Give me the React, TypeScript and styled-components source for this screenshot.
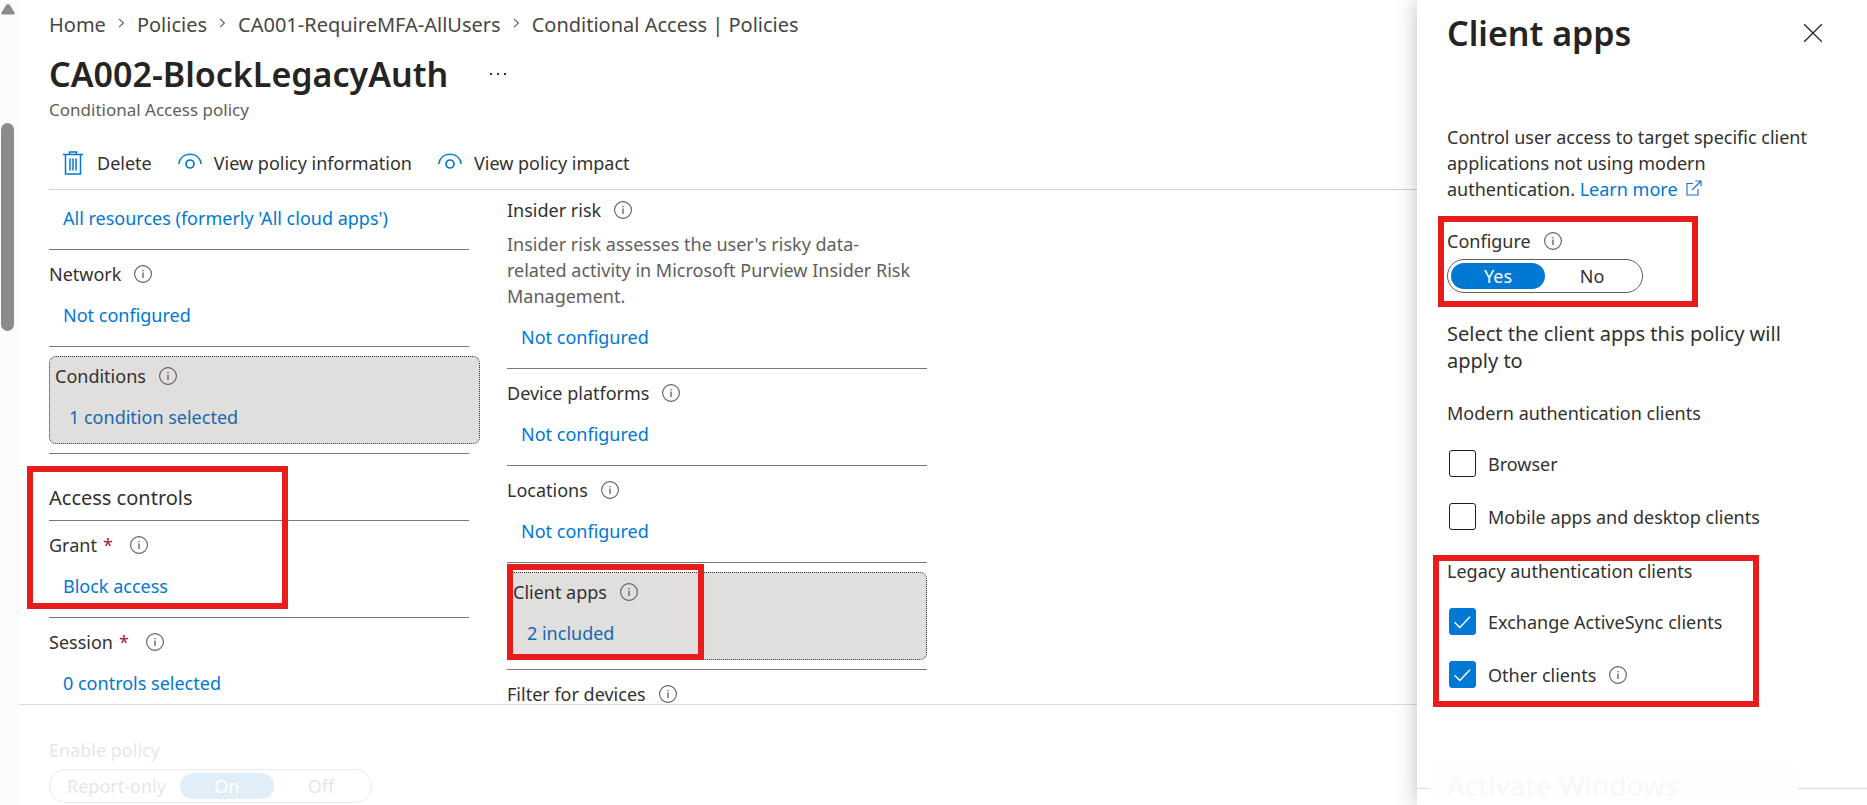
import React from "react";
import styled, { createGlobalStyle, css } from "styled-components";

const GlobalStyle = createGlobalStyle`
  *, *::before, *::after { box-sizing: border-box; }
  body {
    margin: 0;
    background: #fff;
    color: #323130;
    font-family: "Noto Sans", "Open Sans", sans-serif;
    font-size: 18px;
    line-height: 26px;
  }
  h1, h2, h3, p { margin: 0; font-weight: 400; }
  button { font: inherit; color: inherit; background: none; border: 0; padding: 0; cursor: pointer; }
  a { text-decoration: none; }
`;

const Page = styled.div`
  display: grid;
  grid-template-columns: 19px minmax(0, 1fr) 450px;
  height: 100vh;
  overflow: hidden;
`;

/* ---------- scroll rail ---------- */

const Rail = styled.div`
  background: #fcfcfc;
  padding: 4px 0 0 1px;
`;

const RailArrow = styled.svg`
  display: block;
  width: 14px;
  height: 11px;
  fill: #8b8b8b;
`;

const RailThumb = styled.div`
  width: 13px;
  height: 208px;
  margin-top: 108px;
  border-radius: 7px;
  background: #8b8b8b;
`;

/* ---------- main blade ---------- */

const Main = styled.main`
  display: flex;
  flex-direction: column;
  min-width: 0;
  min-height: 0;
`;

const Header = styled.header`
  margin-left: 30px;
  border-bottom: 1px solid #d2d0ce;
`;

const Breadcrumb = styled.nav`
  display: flex;
  align-items: center;
  gap: 12px;
  padding-top: 12px;
  font-size: 20px;
`;

const Crumb = styled.a`
  color: #484644;
`;

const CrumbChevron = styled.svg`
  width: 7px;
  height: 10px;
  margin-bottom: 4px;
  fill: none;
  stroke: #605e5c;
`;

const TitleRow = styled.div`
  display: flex;
  align-items: center;
  gap: 41px;
  padding-top: 12px;
`;

const Title = styled.h1`
  font-size: 34px;
  line-height: 48px;
  font-weight: 600;
  color: #252423;
`;

const MoreButton = styled.button`
  display: flex;
  svg { width: 18px; height: 4px; fill: #323130; }
`;

const Subtitle = styled.p`
  font-size: 17px;
  line-height: 24px;
  color: #605e5c;
`;

const Toolbar = styled.div`
  display: flex;
  gap: 26px;
  padding: 28px 0 13px 12px;
`;

const ToolButton = styled.button`
  display: flex;
  align-items: center;
  gap: 12px;
  svg { display: block; fill: none; stroke: #0078d4; }
`;

const Columns = styled.div`
  flex: 1;
  min-height: 0;
  overflow: hidden;
  display: grid;
  grid-template-columns: 431px 420px;
  column-gap: 27px;
  padding-left: 30px;
`;

const Column = styled.div<{ $top?: number }>`
  padding-top: ${(p) => p.$top ?? 0}px;
`;

const Section = styled.section<{ $ruled?: boolean }>`
  width: 420px;
  padding: ${(p) => (p.$ruled ? "11px 0 18px" : "0 0 18px")};
  border-top: ${(p) => (p.$ruled ? "1px solid #7a7875" : "0")};
`;

const Rule = styled.hr`
  width: 420px;
  margin: 0;
  border: 0;
  border-top: 1px solid #7a7875;
`;

const GroupTitle = styled.h2`
  font-size: 20px;
  padding: 31px 0 9px;
`;

const SelectedCard = styled.section`
  margin: 9px 0;
  padding: 6px 5px 13px;
  background: #e1dfdd;
  border: 1px dotted #323130;
  border-radius: 7px;
  a { color: #1768b3; }
`;

const LabelRow = styled.div`
  display: flex;
  align-items: center;
  gap: 13px;
`;

const Required = styled.span`
  color: #a4262c;
  margin: 0 4px 0 6px;
`;

const InfoSvg = styled.svg`
  width: 18px;
  height: 18px;
  flex: none;
  fill: none;
  stroke: #605e5c;
`;

const Description = styled.p`
  padding: 8px 12px 0 0;
  color: #605e5c;
`;

const ValueLink = styled.a`
  display: block;
  width: fit-content;
  margin: 15px 0 0 14px;
  color: #0078d4;
`;

const Footer = styled.footer`
  border-top: 1px solid #dcdcdc;
  height: 101px;
  padding: 32px 0 0 30px;
`;

const Faded = styled.fieldset`
  margin: 0;
  padding: 0;
  border: 0;
  opacity: 0.12;
`;

const FieldLegend = styled.legend`
  padding: 0 0 3px;
`;

/* ---------- pill toggle ---------- */

const Pills = styled.div`
  display: inline-flex;
  height: 34px;
  padding: 3px;
  border: 1px solid #605e5c;
  border-radius: 17px;
`;

const Pill = styled.label`
  display: flex;
  align-items: center;
  justify-content: center;
  min-width: 94px;
  padding: 0 14px;
  border-radius: 13px;
  cursor: pointer;
  &:has(input:checked) { background: #0078d4; color: #fff; }
  input { appearance: none; width: 0; height: 0; margin: 0; }
`;

/* ---------- side panel ---------- */

const Panel = styled.aside`
  position: relative;
  display: flex;
  flex-direction: column;
  background: #fff;
  box-shadow: 0 0 20px rgba(0, 0, 0, 0.26);
`;

const PanelHeader = styled.div`
  display: flex;
  align-items: center;
  justify-content: space-between;
  padding: 9px 44px 0 30px;
`;

const PanelTitle = styled(Title).attrs({ as: "h2" })``;

const CloseButton = styled.button`
  display: flex;
  svg { width: 20px; height: 20px; fill: none; stroke: #252423; }
`;

const PanelBody = styled.div`
  flex: 1;
  padding: 67px 44px 0 30px;
`;

const LearnMore = styled.a`
  color: #0078d4;
  svg { width: 16px; height: 16px; margin-left: 8px; fill: none; stroke: #1a66e0; }
`;

const Configure = styled.fieldset`
  margin: 26px 0 0;
  padding: 0;
  border: 0;
`;

const ConfigureLegend = styled.legend`
  display: flex;
  align-items: center;
  gap: 13px;
  padding: 0 0 2px;
`;

const Prompt = styled.p`
  font-size: 20px;
  line-height: 27px;
  padding: 27px 24px 0 0;
`;

const CheckGroup = styled.fieldset<{ $top: number }>`
  margin: ${(p) => p.$top}px 0 0;
  padding: 0;
  border: 0;
  legend { padding: 0 0 24px; }
`;

const CheckRow = styled.div`
  display: flex;
  align-items: center;
  gap: 13px;
  padding: 0 0 26px 2px;
  label { display: flex; align-items: center; gap: 12px; cursor: pointer; }
`;

const CheckBox = styled.span`
  display: grid;
  width: 27px;
  height: 27px;
  input {
    grid-area: 1 / 1;
    appearance: none;
    width: 27px;
    height: 27px;
    margin: 0;
    border: 1px solid #201f1e;
    border-radius: 3px;
  }
  input:checked { background: #0078d4; border-color: #0078d4; }
  svg {
    grid-area: 1 / 1;
    width: 27px;
    height: 27px;
    fill: none;
    stroke: #fff;
    pointer-events: none;
    visibility: hidden;
  }
  input:checked + svg { visibility: visible; }
`;

const PanelFooter = styled.div`
  height: 17px;
  border-top: 1px solid #dcdcdc;
`;

const Watermark = styled.div`
  position: absolute;
  left: 13px;
  bottom: 5px;
  width: 368px;
  height: 36px;
  padding-left: 17px;
  overflow: hidden;
  background: #fefefe;
  color: #f7f7f7;
  font-size: 28px;
  line-height: 42px;
`;

/* ---------- red call-outs ---------- */

const Anchor = styled.div`
  position: relative;
`;

const Callout = styled.div<{ $x: number; $y: number; $w: number; $h: number }>`
  position: absolute;
  z-index: 1;
  pointer-events: none;
  border: 6px solid #e81c1c;
  ${(p) => css`
    left: ${p.$x}px;
    top: ${p.$y}px;
    width: ${p.$w}px;
    height: ${p.$h}px;
  `}
`;

/* ---------- icons ---------- */

const InfoIcon = () => (
  <InfoSvg viewBox="0 0 18 18" role="img" aria-label="More information">
    <circle cx="9" cy="9" r="8.4" strokeWidth="1.1" />
    <path d="M9 7.6V13M9 5v1.3" strokeWidth="1.3" />
  </InfoSvg>
);

const TrashIcon = () => (
  <svg width="24" height="24" viewBox="-2 0 24 24" aria-hidden="true">
    <path d="M0 3.5H20M6.5 3.5V1H13.5V3.5M2.5 3.5V23H17.5V3.5" strokeWidth="1.5" />
    <path d="M7 7.5V19.5M10 7.5V19.5M13 7.5V19.5" strokeWidth="1.5" />
  </svg>
);

const EyeIcon = () => (
  <svg width="24" height="20" viewBox="0 0 24 20" aria-hidden="true">
    <path d="M.8 11C1.6 5 6 1.2 12 1.2S22.4 5 23.2 11" strokeWidth="1.5" />
    <circle cx="12" cy="11" r="4" strokeWidth="1.7" />
  </svg>
);

const Chevron = () => (
  <CrumbChevron viewBox="0 0 7 10" aria-hidden="true">
    <path d="M1 .8L5.4 5L1 9.2" strokeWidth="1.1" />
  </CrumbChevron>
);

/* ---------- composed parts ---------- */

type SettingProps = { label: string; value?: string; required?: boolean; description?: string };

const Setting = ({ label, value, required, description }: SettingProps) => (
  <>
    <LabelRow>
      <span>
        {label}
        {required && <Required>*</Required>}
      </span>
      <InfoIcon />
    </LabelRow>
    {description && <Description>{description}</Description>}
    {value && <ValueLink href="#">{value}</ValueLink>}
  </>
);

const PillToggle = ({ name, options, selected }: { name: string; options: string[]; selected: string }) => (
  <Pills>
    {options.map((option) => (
      <Pill key={option}>
        <input type="radio" name={name} value={option} defaultChecked={option === selected} />
        {option}
      </Pill>
    ))}
  </Pills>
);

const Check = ({ label, checked, info }: { label: string; checked?: boolean; info?: boolean }) => (
  <CheckRow>
    <label>
      <CheckBox>
        <input type="checkbox" defaultChecked={checked} />
        <svg viewBox="0 0 27 27" aria-hidden="true">
          <path d="M5.5 14.3L10.8 19.5L21 8.8" strokeWidth="1.4" />
        </svg>
      </CheckBox>
      {label}
    </label>
    {info && <InfoIcon />}
  </CheckRow>
);

const crumbs = ["Home", "Policies", "CA001-RequireMFA-AllUsers", "Conditional Access | Policies"];

export default function App() {
  return (
    <>
      <GlobalStyle />
      <Page>
        <Rail>
          <RailArrow viewBox="0 0 14 11" aria-hidden="true">
            <path d="M7 0Q8 0 8.8 1L13.5 8.5Q14.4 10.5 12.5 10.5H1.5Q-.4 10.5 .5 8.5L5.2 1Q6 0 7 0Z" />
          </RailArrow>
          <RailThumb />
        </Rail>

        <Main>
          <Header>
            <Breadcrumb aria-label="Breadcrumb">
              {crumbs.map((crumb, i) => (
                <React.Fragment key={crumb}>
                  {i > 0 && <Chevron />}
                  <Crumb href="#">{crumb}</Crumb>
                </React.Fragment>
              ))}
            </Breadcrumb>
            <TitleRow>
              <Title>CA002-BlockLegacyAuth</Title>
              <MoreButton type="button" aria-label="More actions">
                <svg viewBox="0 0 18 4" aria-hidden="true">
                  <rect x="1" y="1" width="2" height="2" />
                  <rect x="8" y="1" width="2" height="2" />
                  <rect x="15" y="1" width="2" height="2" />
                </svg>
              </MoreButton>
            </TitleRow>
            <Subtitle>Conditional Access policy</Subtitle>
            <Toolbar>
              <ToolButton type="button"><TrashIcon />Delete</ToolButton>
              <ToolButton type="button"><EyeIcon />View policy information</ToolButton>
              <ToolButton type="button"><EyeIcon />View policy impact</ToolButton>
            </Toolbar>
          </Header>

          <Columns>
            <Column>
              <Section>
                <ValueLink href="#">All resources (formerly 'All cloud apps')</ValueLink>
              </Section>
              <Section $ruled>
                <Setting label="Network" value="Not configured" />
              </Section>
              <Rule />
              <SelectedCard>
                <Setting label="Conditions" value="1 condition selected" />
              </SelectedCard>
              <Rule />
              <Anchor>
                <GroupTitle>Access controls</GroupTitle>
                <Section $ruled>
                  <Setting label="Grant" value="Block access" required />
                </Section>
                <Callout $x={-22} $y={12} $w={261} $h={143} />
              </Anchor>
              <Section $ruled>
                <Setting label="Session" value="0 controls selected" required />
              </Section>
            </Column>

            <Column $top={7}>
              <Section>
                <Setting
                  label="Insider risk"
                  value="Not configured"
                  description="Insider risk assesses the user's risky data-related activity in Microsoft Purview Insider Risk Management."
                />
              </Section>
              <Section $ruled>
                <Setting label="Device platforms" value="Not configured" />
              </Section>
              <Section $ruled>
                <Setting label="Locations" value="Not configured" />
              </Section>
              <Rule />
              <Anchor>
                <SelectedCard>
                  <Setting label="Client apps" value="2 included" />
                </SelectedCard>
                <Callout $x={0} $y={-8} $w={197} $h={96} />
              </Anchor>
              <Section $ruled>
                <Setting label="Filter for devices" />
              </Section>
            </Column>
          </Columns>

          <Footer>
            <Faded>
              <FieldLegend>Enable policy</FieldLegend>
              <PillToggle name="enable" options={["Report-only", "On", "Off"]} selected="On" />
            </Faded>
          </Footer>
        </Main>

        <Panel>
          <PanelHeader>
            <PanelTitle>Client apps</PanelTitle>
            <CloseButton type="button" aria-label="Close">
              <svg viewBox="0 0 20 20" aria-hidden="true">
                <path d="M1.2 1.2L18.8 18.8M18.8 1.2L1.2 18.8" strokeWidth="1.3" />
              </svg>
            </CloseButton>
          </PanelHeader>
          <PanelBody>
            <p>
              Control user access to target specific client applications not using modern authentication.{" "}
              <LearnMore href="#">
                Learn more
                <svg viewBox="0 0 16 16" aria-hidden="true">
                  <path d="M7 3.5H1V15H12V9M9.5 1H15V6.5M15 1L6 10" strokeWidth="1.1" />
                </svg>
              </LearnMore>
            </p>
            <Anchor>
              <Configure>
                <ConfigureLegend>Configure <InfoIcon /></ConfigureLegend>
                <PillToggle name="configure" options={["Yes", "No"]} selected="Yes" />
              </Configure>
              <Callout $x={-9} $y={-12} $w={260} $h={91} />
            </Anchor>
            <Prompt>Select the client apps this policy will apply to</Prompt>
            <CheckGroup $top={26}>
              <legend>Modern authentication clients</legend>
              <Check label="Browser" />
              <Check label="Mobile apps and desktop clients" />
            </CheckGroup>
            <Anchor>
              <CheckGroup $top={2}>
                <legend>Legacy authentication clients</legend>
                <Check label="Exchange ActiveSync clients" checked />
                <Check label="Other clients" checked info />
              </CheckGroup>
              <Callout $x={-14} $y={-3} $w={326} $h={152} />
            </Anchor>
          </PanelBody>
          <PanelFooter />
          <Watermark aria-hidden="true">Activate Windows</Watermark>
        </Panel>
      </Page>
    </>
  );
}
